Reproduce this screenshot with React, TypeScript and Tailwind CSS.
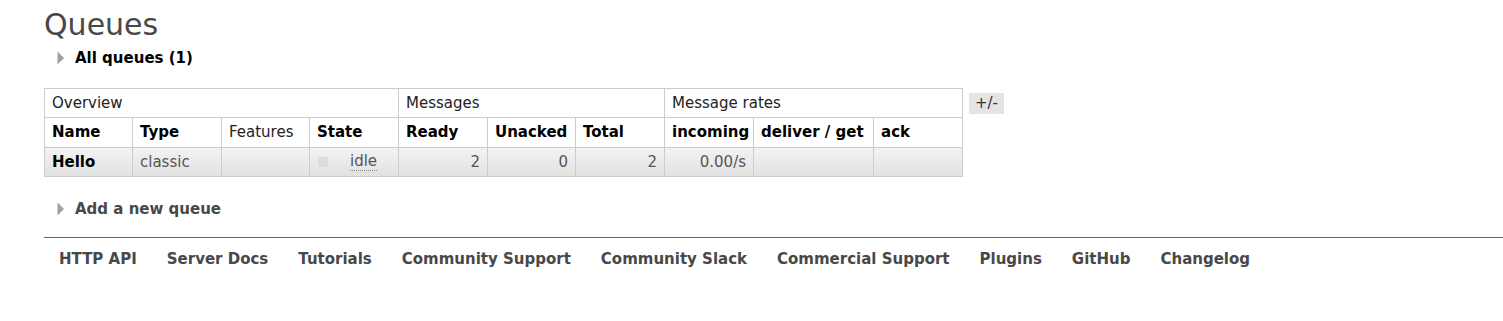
import React from "react";

const font = { fontFamily: '"DejaVu Sans", Verdana, sans-serif' };

function Tri() {
  return (
    <svg width="8" height="14" viewBox="0 0 8 14" className="shrink-0">
      <path d="M0.5 0.5 L7 7 L0.5 13.5 Z" fill="#a0a0a0" />
    </svg>
  );
}

const links = [
  "HTTP API",
  "Server Docs",
  "Tutorials",
  "Community Support",
  "Community Slack",
  "Commercial Support",
  "Plugins",
  "GitHub",
  "Changelog",
];

const cols = [88, 89, 88, 89, 89, 88, 89, 89, 120, 89];

export default function App() {
  const th = "border border-[#cccccc] px-[7px] text-left font-bold text-black h-[30px] whitespace-nowrap";
  const td = "border border-[#cccccc] px-[7px] h-[29px] whitespace-nowrap";
  return (
    <div className="w-[1503px] h-[321px] bg-white overflow-hidden text-[#484848]" style={font}>
      <div className="pl-[44px]">
        <h1 className="pt-[7px] text-[30px] leading-[35px] font-normal text-[#484848]">Queues</h1>
        <div className="flex items-center gap-[10px] pl-[13px] mt-[7px] h-[18px]">
          <Tri />
          <span className="text-[15px] font-bold text-black leading-[18px]">All queues (1)</span>
        </div>
        <div className="flex items-start mt-[21px] gap-[6px]">
          <table className="table-fixed border-collapse text-[15px] w-[918px]">
            <colgroup>
              {cols.map((w, i) => (
                <col key={i} style={{ width: w }} />
              ))}
            </colgroup>
            <thead>
              <tr>
                <th colSpan={4} className="border border-[#cccccc] px-[7px] text-left font-normal text-[#222] h-[29px]">Overview</th>
                <th colSpan={3} className="border border-[#cccccc] px-[7px] text-left font-normal text-[#222] h-[29px]">Messages</th>
                <th colSpan={3} className="border border-[#cccccc] px-[7px] text-left font-normal text-[#222] h-[29px]">Message rates</th>
              </tr>
              <tr>
                <th className={th}>Name</th>
                <th className={th}>Type</th>
                <th className="border border-[#cccccc] px-[7px] text-left font-normal text-[#222] h-[30px] whitespace-nowrap">Features</th>
                <th className={th}>State</th>
                <th className={th}>Ready</th>
                <th className={th}>Unacked</th>
                <th className={th}>Total</th>
                <th className={th}>incoming</th>
                <th className={th}>deliver / get</th>
                <th className={th}>ack</th>
              </tr>
            </thead>
            <tbody>
              <tr className="bg-gradient-to-b from-[#f3f3f3] to-[#e1e1e1]">
                <td className={td + " font-bold text-black"}>Hello</td>
                <td className={td + " text-[#555]"}>classic</td>
                <td className={td}></td>
                <td className={td}>
                  <div className="flex items-center">
                    <span className="w-[10px] h-[10px] bg-[#dddddd] ml-[1px]" />
                    <span className="ml-[22px] text-[#555] border-b border-dotted border-[#888] leading-[17px]">idle</span>
                  </div>
                </td>
                <td className={td + " text-right text-[#555]"}>2</td>
                <td className={td + " text-right text-[#555]"}>0</td>
                <td className={td + " text-right text-[#555]"}>2</td>
                <td className={td + " text-right text-[#555]"}>0.00/s</td>
                <td className={td}></td>
                <td className={td}></td>
              </tr>
            </tbody>
          </table>
          <div className="mt-[5px] w-[35px] h-[21px] bg-[#e4e4e4] text-[15px] text-[#333] flex items-center justify-center">
            +/-
          </div>
        </div>
        <div className="flex items-center gap-[10px] pl-[13px] mt-[23px] h-[18px]">
          <Tri />
          <span className="text-[15px] font-bold text-[#484848] leading-[18px]">Add a new queue</span>
        </div>
      </div>
      <div className="ml-[44px] mt-[19px] border-t border-[#666666]" />
      <ul className="flex pl-[44px] mt-[11px]">
        {links.map((l) => (
          <li key={l} className="px-[15px] text-[15px] font-bold text-[#484848] leading-[20px] whitespace-nowrap">
            {l}
          </li>
        ))}
      </ul>
    </div>
  );
}
